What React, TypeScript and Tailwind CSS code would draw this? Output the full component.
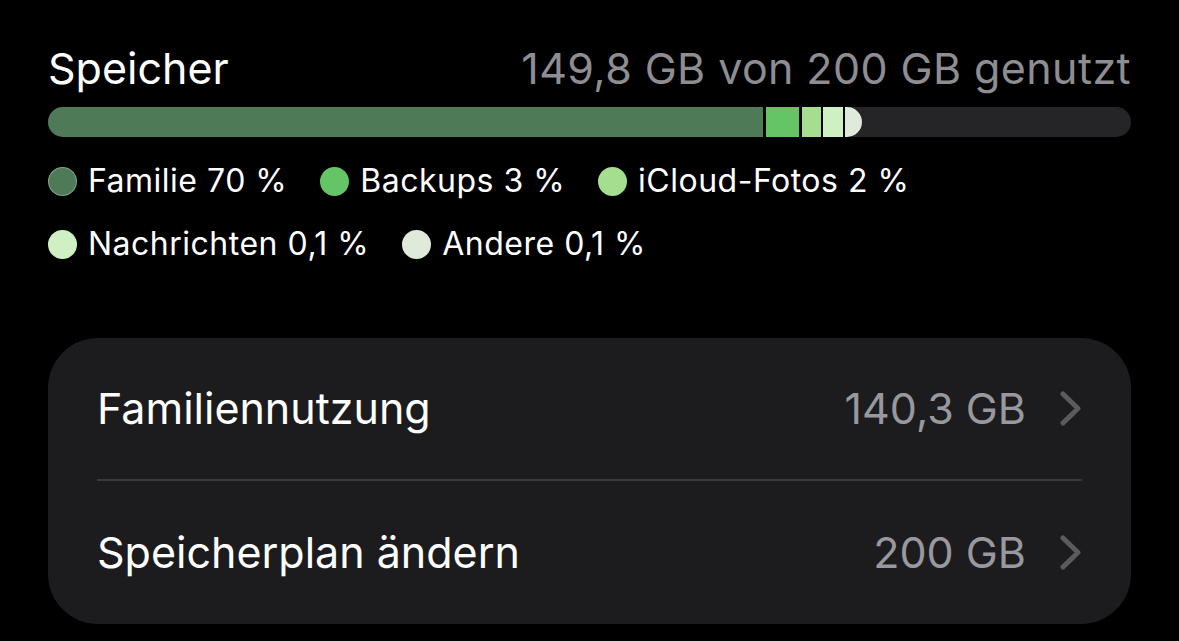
const font = { fontFamily: 'Inter, "Noto Sans", sans-serif' };

const segments = [
  { key: 'familie', className: 'w-[718px] bg-[#4f7a57] border-r-[3px] border-black' },
  { key: 'backups', className: 'w-[36px] bg-[#65c466] border-r-[3px] border-black' },
  { key: 'fotos', className: 'w-[21px] bg-[#a6de8f] border-r-2 border-black' },
  { key: 'nachrichten', className: 'w-[22px] bg-[#cff0c2] border-r-2 border-black' },
  { key: 'andere', className: 'w-[17px] bg-[#dfeadb] rounded-r-full' },
];

function LegendItem({ color, label, ring }: { color: string; label: string; ring?: boolean }) {
  return (
    <div className="flex items-center gap-[11px]">
      <span className={`w-[29px] h-[29px] rounded-full ${color} ${ring ? 'border border-white/30' : ''}`} />
      <span className="text-[32px] leading-[40px] text-white tracking-[0.5px]">{label}</span>
    </div>
  );
}

function Chevron() {
  return (
    <svg width="21" height="35" viewBox="0 0 21 35" fill="none">
      <path d="M3 3 L18 17.5 L3 32" stroke="#5a5a5f" strokeWidth="5" strokeLinecap="round" strokeLinejoin="round" />
    </svg>
  );
}

function Row({ label, value, h }: { label: string; value: string; h: string }) {
  return (
    <div className={`flex items-center justify-between ${h} pl-[49px] pr-[50px]`}>
      <span className="text-[43px] text-white">{label}</span>
      <div className="flex items-center gap-[34px]">
        <span className="text-[43px] text-[#98989e]">{value}</span>
        <Chevron />
      </div>
    </div>
  );
}

export default function App() {
  return (
    <div className="w-[1179px] h-[641px] bg-black overflow-hidden px-[48px] pt-[44px]" style={font}>
      <div className="flex items-center justify-between h-[48px]">
        <span className="text-[43px] text-white">Speicher</span>
        <span className="text-[43px] text-[#8d8d92] tracking-[0.4px]">149,8 GB von 200 GB genutzt</span>
      </div>

      <div className="mt-[15px] h-[30px] rounded-full bg-[#252527] overflow-hidden flex">
        {segments.map((s) => (
          <div key={s.key} className={`h-full shrink-0 ${s.className}`} />
        ))}
      </div>

      <div className="mt-[24px] flex gap-[33px]">
        <LegendItem color="bg-[#4f7a57]" label="Familie 70 %" ring />
        <LegendItem color="bg-[#65c466]" label="Backups 3 %" />
        <LegendItem color="bg-[#a6de8f]" label="iCloud-Fotos 2 %" />
      </div>
      <div className="mt-[23px] flex gap-[33px]">
        <LegendItem color="bg-[#cff0c2]" label="Nachrichten 0,1 %" />
        <LegendItem color="bg-[#dfeadb]" label="Andere 0,1 %" />
      </div>

      <div className="mt-[74px] rounded-[50px] bg-[#1c1c1e]">
        <Row label="Familiennutzung" value="140,3 GB" h="h-[141px]" />
        <div className="mx-[49px] h-[2px] bg-[#3a3a3c]" />
        <Row label="Speicherplan ändern" value="200 GB" h="h-[143px]" />
      </div>
    </div>
  );
}
